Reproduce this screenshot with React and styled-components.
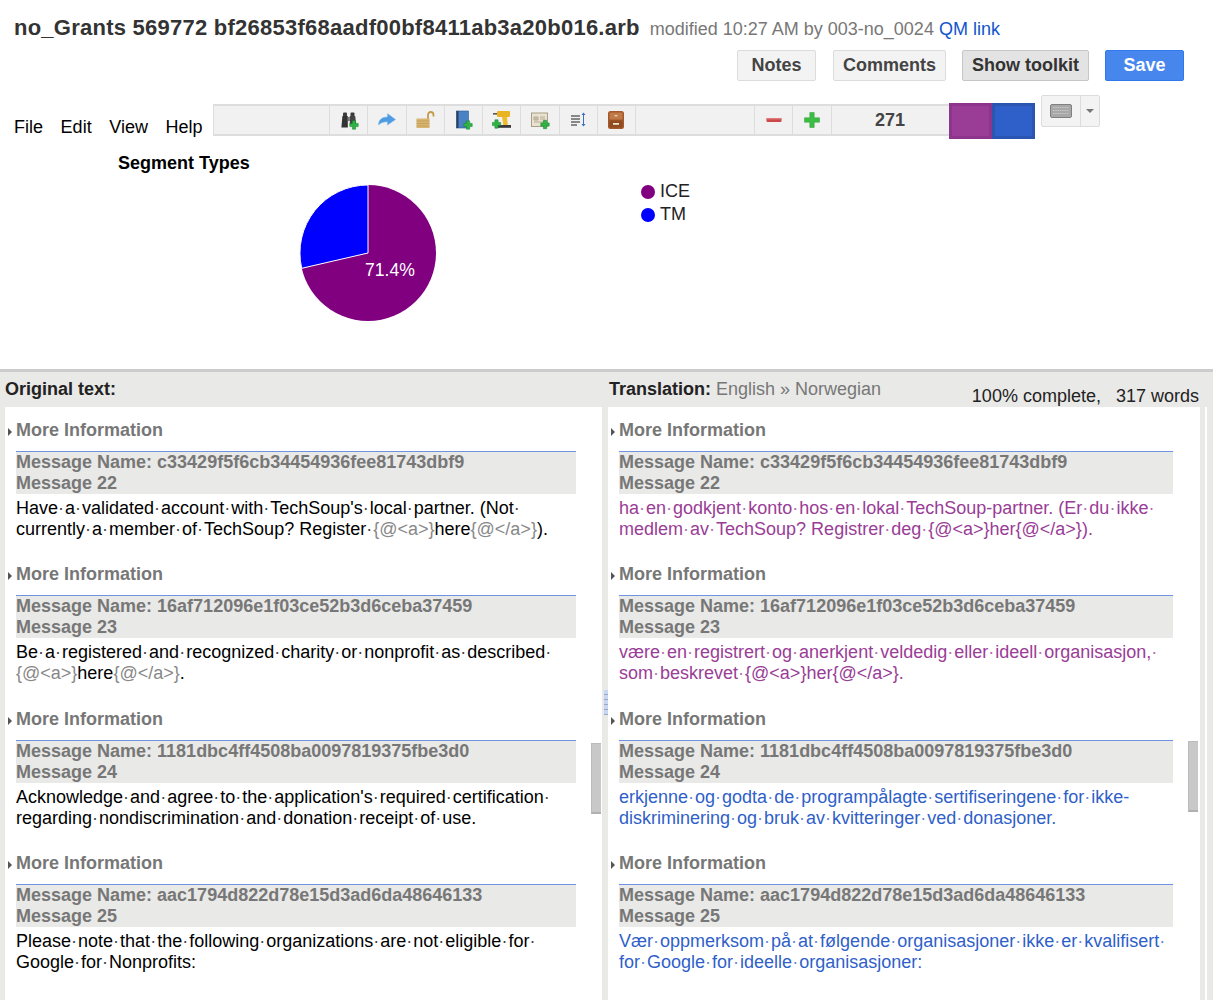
import React from 'react';
import styled, { createGlobalStyle, css } from 'styled-components';

const GlobalStyle = createGlobalStyle`
    html, body {
        margin: 0;
        padding: 0;
        background: #fff;
        font-family: "Liberation Sans", Arial, sans-serif;
    }
`;

const blocks = [
    {
        name: 'c33429f5f6cb34454936fee81743dbf9',
        number: 22,
        tone: 'purple',
        source: [
            ['Have·a·validated·account·with·TechSoup\'s·local·partner. (Not·'],
            ['currently·a·member·of·TechSoup? Register·', { tag: '{@<a>}' }, 'here', { tag: '{@</a>}' }, ').'],
        ],
        target: [
            ['ha·en·godkjent·konto·hos·en·lokal·TechSoup-partner. (Er·du·ikke·'],
            ['medlem·av·TechSoup? Registrer·deg·', { tag: '{@<a>}' }, 'her', { tag: '{@</a>}' }, ').'],
        ],
    },
    {
        name: '16af712096e1f03ce52b3d6ceba37459',
        number: 23,
        tone: 'purple',
        source: [
            ['Be·a·registered·and·recognized·charity·or·nonprofit·as·described·'],
            [{ tag: '{@<a>}' }, 'here', { tag: '{@</a>}' }, '.'],
        ],
        target: [
            ['være·en·registrert·og·anerkjent·veldedig·eller·ideell·organisasjon,·'],
            ['som·beskrevet·', { tag: '{@<a>}' }, 'her', { tag: '{@</a>}' }, '.'],
        ],
    },
    {
        name: '1181dbc4ff4508ba0097819375fbe3d0',
        number: 24,
        tone: 'blue',
        source: [
            ['Acknowledge·and·agree·to·the·application\'s·required·certification·'],
            ['regarding·nondiscrimination·and·donation·receipt·of·use.'],
        ],
        target: [
            ['erkjenne·og·godta·de·programpålagte·sertifiseringene·for·ikke-'],
            ['diskriminering·og·bruk·av·kvitteringer·ved·donasjoner.'],
        ],
    },
    {
        name: 'aac1794d822d78e15d3ad6da48646133',
        number: 25,
        tone: 'blue',
        source: [
            ['Please·note·that·the·following·organizations·are·not·eligible·for·'],
            ['Google·for·Nonprofits:'],
        ],
        target: [
            ['Vær·oppmerksom·på·at·følgende·organisasjoner·ikke·er·kvalifisert·'],
            ['for·Google·for·ideelle·organisasjoner:'],
        ],
    },
];

const PlusBadge = ({ x = 12, y = 12 }) => (
    <g transform={`translate(${x} ${y})`}>
        <path d="M-1.600 -4.200h3.200v2.600h2.600v3.200h-2.600v2.600h-3.200v-2.600h-2.600v-3.200h2.600z" fill="#2fb344" stroke="#14802a" strokeWidth=".5" />
    </g>
);

const Binoculars = () => (
    <Icon viewBox="0 0 20 20">
        <rect x="4" y="2.500" width="4" height="4" rx="1" fill="#3a3a3a" />
        <rect x="11.500" y="2.500" width="4" height="4" rx="1" fill="#3a3a3a" />
        <path d="M3.400 6h5.400v11.400H2.400z" fill="#333" />
        <path d="M10.800 6h5.400l1 9h-6.400z" fill="#444" />
        <rect x="8.800" y="7" width="2" height="4" fill="#777" />
        <PlusBadge x={15} y={15} />
    </Icon>
);

const ShareArrow = () => (
    <Icon viewBox="0 0 20 20">
        <path d="M1.500 15c0-5 3-8 9-8V3.600l8 5.900-8 5.600V11.800c-4 0-6.500 .7-9 3.200z" fill="#4d9be0" stroke="#7ab8ec" strokeWidth=".5" />
    </Icon>
);

const OpenLock = () => (
    <Icon viewBox="0 0 20 20">
        <path d="M13 9V5c0-1.800 1.200-3 2.700-3s2.800 1.200 2.800 3v1.500" fill="none" stroke="#c49a4a" strokeWidth="1.800" />
        <rect x="1.500" y="8.500" width="13" height="9.500" fill="#d8b671" />
        <path d="M1.500 11h13M1.500 13.500h13M1.500 16h13" stroke="#c09a55" strokeWidth=".7" />
    </Icon>
);

const Book = () => (
    <Icon viewBox="0 0 20 20">
        <rect x="3.500" y="1" width="12" height="17" fill="#4a82c4" stroke="#2d5c96" strokeWidth=".6" />
        <rect x="3.500" y="1" width="2" height="17" fill="#2a3f5e" />
        <PlusBadge x={15} y={15} />
    </Icon>
);

const Drill = () => (
    <Icon viewBox="0 0 20 20">
        <path d="M1 3h4v1.600H1z" fill="#555" />
        <rect x="5" y="1" width="13" height="6" rx="1" fill="#e9b422" />
        <path d="M10 7h5l.8 8h-4.500z" fill="#eebc2c" />
        <rect x="6" y="15" width="13" height="2.800" fill="#3a3a3a" />
        <PlusBadge x={4.500} y={14} />
    </Icon>
);

const PictureCard = () => (
    <Icon viewBox="0 0 20 20">
        <rect x="1.500" y="3" width="16" height="13.500" fill="#e9e2d0" stroke="#a89d86" strokeWidth="1" />
        <path d="M4 7h4v3H4zM10 7h5M10 9h5M4 12h11" stroke="#b6ab94" strokeWidth="1" fill="#c9bfa8" />
        <PlusBadge x={15} y={14.500} />
    </Icon>
);

const LineHeight = () => (
    <Icon viewBox="0 0 20 20">
        <path d="M3 6h9M3 9h9M3 12h9M3 15h6" stroke="#666" strokeWidth="1.500" />
        <path d="M15.500 3v13" stroke="#3a6fc4" strokeWidth="1" />
        <path d="M13.500 5l2-2.500 2 2.500zM13.500 14l2 2.500 2-2.500z" fill="#3a6fc4" />
    </Icon>
);

const Cabinet = () => (
    <Icon viewBox="0 0 20 20">
        <rect x="2" y="1" width="16" height="18" rx="2.500" fill="#a4592a" />
        <rect x="3.500" y="2.500" width="13" height="7" rx="1" fill="#c07a48" />
        <rect x="3.500" y="10.500" width="13" height="7" rx="1" fill="#8f4a20" />
        <rect x="8.500" y="5" width="3" height="1.400" fill="#e6d0b5" />
        <rect x="7" y="13" width="6" height="1.800" fill="#f0e2cf" />
    </Icon>
);

const Minus = () => (
    <Icon viewBox="0 0 20 20">
        <rect x="2.500" y="8" width="15" height="4" rx="1" fill="#cc4747" />
        <rect x="2.500" y="8" width="15" height="1.400" fill="#e07a7a" />
    </Icon>
);

const Plus = () => (
    <Icon viewBox="0 0 20 20">
        <path d="M7.800 2.500h4.400v5.300h5.300v4.400h-5.300v5.300H7.800v-5.300H2.500V7.800h5.300z" fill="#3cbe46" stroke="#2a9e35" strokeWidth=".5" />
    </Icon>
);

const KeyboardGlyph = () => (
    <svg width="22" height="14" viewBox="0 0 22 14">
        <rect x=".5" y=".5" width="21" height="13" rx="1.500" fill="#a8a8a8" stroke="#808080" />
        <path d="M3 3.500h16M3 6.500h16M3 9.500h16" stroke="#c8c8c8" strokeWidth="1.200" strokeDasharray="1.500 .8" />
    </svg>
);

const renderPiece = (piece, i, tagged) => {
    if (typeof piece !== 'string') {
        return <Tag key={i} $muted={tagged}>{piece.tag}</Tag>;
    }
    return piece.split('·').map((word, j, all) => (
        <React.Fragment key={`${i}-${j}`}>
            {word}
            {j < all.length - 1 && <Dot>·</Dot>}
        </React.Fragment>
    ));
};

const Block = ({ block, side, first }) => (
    <MessageBlock $first={first}>
        <MoreInfo>
            <Caret />
            More Information
        </MoreInfo>
        <MessageHead $side={side}>
            <div>Message Name: {block.name}</div>
            <div>Message {block.number}</div>
        </MessageHead>
        <Body $tone={side === 'target' ? block.tone : null}>
            {block[side].map((line, i) => (
                <Line key={i}>{line.map((piece, k) => renderPiece(piece, k, side === 'source'))}</Line>
            ))}
        </Body>
    </MessageBlock>
);

const App = () => (
    <Page>
        <GlobalStyle />
        <TopArea>
            <TitleRow>
                <Title>no_Grants 569772 bf26853f68aadf00bf8411ab3a20b016.arb</Title>
                <Meta>modified 10:27 AM by 003-no_0024</Meta>
                <QmLink>QM link</QmLink>
            </TitleRow>
            <ActionRow>
                <ActionButton $wide>Notes</ActionButton>
                <ActionButton>Comments</ActionButton>
                <ActionButton $pressed>Show toolkit</ActionButton>
                <ActionButton $primary>Save</ActionButton>
            </ActionRow>
            <ToolRow>
                <Menu>
                    <MenuItem>File</MenuItem>
                    <MenuItem>Edit</MenuItem>
                    <MenuItem>View</MenuItem>
                    <MenuItem>Help</MenuItem>
                </Menu>
                <Toolbar>
                    <ToolCell $width={117} />
                    <ToolCell><Binoculars /></ToolCell>
                    <ToolCell><ShareArrow /></ToolCell>
                    <ToolCell><OpenLock /></ToolCell>
                    <ToolCell><Book /></ToolCell>
                    <ToolCell><Drill /></ToolCell>
                    <ToolCell><PictureCard /></ToolCell>
                    <ToolCell><LineHeight /></ToolCell>
                    <ToolCell><Cabinet /></ToolCell>
                    <ToolCell $width={119} />
                    <ToolCell><Minus /></ToolCell>
                    <ToolCell><Plus /></ToolCell>
                    <ToolCell $width={117} $last>271</ToolCell>
                </Toolbar>
                <Swatch $color="#993d96" $edge="#8c358a" />
                <Swatch $color="#2f60c9" $edge="#2a55b0" />
                <KeyboardButton>
                    <KeyboardMain><KeyboardGlyph /></KeyboardMain>
                    <KeyboardArrow />
                </KeyboardButton>
            </ToolRow>
            <ChartSvg viewBox="0 0 1213 230" width="1213" height="230">
                <text x="118" y="30" fontSize="18" fontWeight="700" fill="#000">Segment Types</text>
                <circle cx="368" cy="114" r="68" fill="#800080" />
                <path d="M368 114V46A68 68 0 0 0 301.700 129.300z" fill="#0000ff" stroke="#fff" strokeWidth="1" />
                <text x="365" y="137" fontSize="17.600" fill="#fff">71.4%</text>
                <circle cx="648" cy="53" r="7" fill="#800080" />
                <text x="660" y="58" fontSize="18" fill="#222">ICE</text>
                <circle cx="648" cy="76" r="7" fill="#0000ff" />
                <text x="660" y="81" fontSize="18" fill="#222">TM</text>
            </ChartSvg>
        </TopArea>
        <Workspace>
            <PanelHeads>
                <PanelHead $width={599}>
                    <HeadLabel>Original text:</HeadLabel>
                </PanelHead>
                <PanelHead $width={590}>
                    <HeadLabel>Translation:</HeadLabel>
                    <HeadLang> English » Norwegian</HeadLang>
                    <Progress>100% complete, &nbsp; 317 words</Progress>
                </PanelHead>
            </PanelHeads>
            <PanelRow>
                <Panel $width={597}>
                    {blocks.map((b, i) => <Block key={b.number} block={b} side="source" first={i === 0} />)}
                    <ScrollThumb $top={336} $right={1} />
                </Panel>
                <Splitter><Grip /></Splitter>
                <Panel $width={592}>
                    {blocks.map((b, i) => <Block key={b.number} block={b} side="target" first={i === 0} />)}
                    <ScrollThumb $top={334} $right={2} />
                </Panel>
                <RailGap />
            </PanelRow>
        </Workspace>
    </Page>
);

const Page = styled.div`
    width: 1213px;
    height: 1000px;
    overflow: hidden;
    display: flex;
    flex-direction: column;
`;

const TopArea = styled.div`
    height: 369px;
    flex-shrink: 0;
`;

const TitleRow = styled.div`
    height: 50px;
    padding: 15px 0 0 14px;
    box-sizing: border-box;
    display: flex;
    align-items: baseline;
    white-space: nowrap;
`;

const Title = styled.span`
    font-size: 22px;
    font-weight: 700;
    letter-spacing: 0.245px;
    color: #333;
    margin-right: 10px;
`;

const Meta = styled.span`
    font-size: 18px;
    color: #777;
    margin-right: 5px;
`;

const QmLink = styled.span`
    font-size: 18px;
    color: #1155cc;
`;

const ActionRow = styled.div`
    height: 45px;
    display: flex;
    justify-content: flex-end;
    align-items: flex-start;
    gap: 16px;
    padding-right: 29px;
`;

const ActionButton = styled.div`
    height: 31px;
    padding: 0 9px;
    box-sizing: border-box;
    display: flex;
    align-items: center;
    font-size: 18px;
    font-weight: 700;
    color: #444;
    background: #f3f3f3;
    border: 1px solid #dcdcdc;
    border-radius: 2px;

    ${({ $wide }) => $wide && css`
        width: 79px;
        margin-right: 1px;
        justify-content: center;
    `}

    ${({ $pressed }) => $pressed && css`
        background: #e3e3e3;
        border-color: #c6c6c6;
        color: #333;
    `}

    ${({ $primary }) => $primary && css`
        width: 79px;
        justify-content: center;
        background: #4787ed;
        border-color: #3079ed;
        color: #fff;
    `}
`;

const ToolRow = styled.div`
    height: 50px;
    display: flex;
    align-items: flex-start;
`;

const Menu = styled.div`
    width: 199px;
    height: 43px;
    padding-left: 14px;
    display: flex;
    align-items: flex-end;
    gap: 17.6px;
`;

const MenuItem = styled.span`
    font-size: 18px;
    color: #000;
    line-height: 21px;
`;

const Toolbar = styled.div`
    margin-top: 9px;
    height: 32px;
    display: flex;
    background: #f1f1f1;
    border-top: 2px solid #ddd;
    border-bottom: 2px solid #ddd;
    box-sizing: border-box;
`;

const ToolCell = styled.div`
    width: ${({ $width }) => $width || 38.25}px;
    display: flex;
    align-items: center;
    justify-content: center;
    box-sizing: border-box;
    border-right: 1px solid #ddd;
    border-left: ${({ $width }) => ($width === 117 ? '1px' : '0')} solid #ddd;
    font-size: 18px;
    font-weight: 700;
    color: #444;

    ${({ $last }) => $last && css`
        border-right: 0;
        border-left: 0;
    `}
`;

const Icon = styled.svg`
    width: 20px;
    height: 20px;
`;

const Swatch = styled.div`
    width: 43px;
    height: 36px;
    margin-top: 8px;
    box-sizing: border-box;
    background: ${({ $color }) => $color};
    border: 3px solid ${({ $edge }) => $edge};
`;

const KeyboardButton = styled.div`
    margin-left: 6px;
    width: 59px;
    height: 32px;
    box-sizing: border-box;
    display: flex;
    background: #f3f3f3;
    border: 1px solid #dcdcdc;
    border-radius: 2px;
`;

const KeyboardMain = styled.div`
    width: 38px;
    display: flex;
    align-items: center;
    justify-content: center;
    border-right: 1px solid #dcdcdc;
`;

const KeyboardArrow = styled.div`
    flex: 1;
    display: flex;
    align-items: center;
    justify-content: center;

    &::after {
        content: "";
        border-left: 4px solid transparent;
        border-right: 4px solid transparent;
        border-top: 4px solid #777;
    }
`;

const ChartSvg = styled.svg`
    display: block;
    margin-top: -6px;
    font-family: "Liberation Sans", Arial, sans-serif;
`;

const Workspace = styled.div`
    flex: 1;
    display: flex;
    flex-direction: column;
    border-top: 3px solid #ccc;
    background: #e9e9e7;
    min-height: 0;
`;

const PanelHeads = styled.div`
    height: 35px;
    flex-shrink: 0;
    display: flex;
`;

const PanelHead = styled.div`
    width: ${({ $width }) => $width}px;
    padding-left: 5px;
    line-height: 34px;
    font-size: 18px;
    position: relative;
    white-space: pre;
`;

const HeadLabel = styled.span`
    font-weight: 700;
    color: #222;
`;

const HeadLang = styled.span`
    color: #777;
`;

const Progress = styled.span`
    position: absolute;
    right: 0;
    top: 7px;
    color: #222;
`;

const PanelRow = styled.div`
    flex: 1;
    min-height: 0;
    display: flex;
    padding-left: 5px;
`;

const Panel = styled.div`
    position: relative;
    width: ${({ $width }) => $width}px;
    flex-shrink: 0;
    overflow: hidden;
    background: #fff;
    padding-left: 3px;
    box-sizing: border-box;
`;

const Splitter = styled.div`
    width: 6px;
    flex-shrink: 0;
    position: relative;
`;

const Grip = styled.div`
    position: absolute;
    left: 2px;
    top: 283px;
    width: 4px;
    height: 25px;
    background: repeating-linear-gradient(#c6d6f4 0 4px, #9aa8c4 4px 5px);
`;

const RailGap = styled.div`
    width: 2px;
    height: 100%;
    margin-left: 5px;
    background: #fff;
`;

const ScrollThumb = styled.div`
    position: absolute;
    top: ${({ $top }) => $top}px;
    right: ${({ $right }) => $right}px;
    width: 10px;
    height: 71px;
    box-sizing: border-box;
    background: #c8c8c8;
    border-left: 1px solid #bbb;
    border-bottom: 2px solid #b0b0b0;
    border-top: 1px solid #bbb;
`;

const MessageBlock = styled.div`
    padding-top: ${({ $first }) => ($first ? 13 : 24.4)}px;
`;

const MoreInfo = styled.div`
    display: flex;
    align-items: center;
    font-size: 18px;
    line-height: 21px;
    font-weight: 700;
    color: #777;
`;

const Caret = styled.span`
    width: 0;
    height: 0;
    margin-right: 4px;
    margin-top: 3px;
    border-top: 4px solid transparent;
    border-bottom: 4px solid transparent;
    border-left: 4px solid #555;
`;

const MessageHead = styled.div`
    margin: 10px ${({ $side }) => ($side === 'source' ? 26 : 27)}px 0 8px;
    height: 43px;
    box-sizing: border-box;
    border-top: 1px solid #6d94e0;
    background: #e9e9e7;
    font-size: 18px;
    line-height: 21px;
    font-weight: 700;
    color: #777;
`;

const toneColors = { purple: '#993d96', blue: '#2f5fc9' };

const Body = styled.div`
    margin: 4px 0 0 8px;
    font-size: 18px;
    line-height: 21px;
    color: ${({ $tone }) => toneColors[$tone] || '#000'};
`;

const Line = styled.div`
    white-space: pre;
`;

const Dot = styled.span`
    letter-spacing: 1px;
    opacity: 0.75;
`;

const Tag = styled.span`
    color: ${({ $muted }) => ($muted ? '#888' : 'inherit')};
`;

export default App;
